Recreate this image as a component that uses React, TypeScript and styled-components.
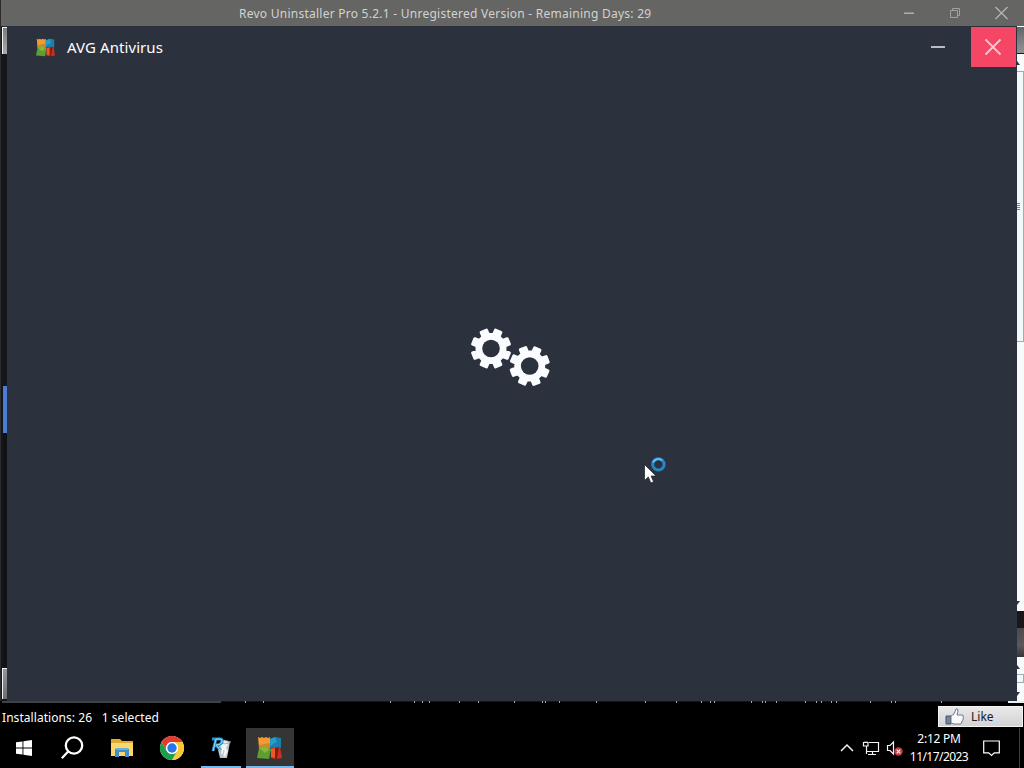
import React from 'react';
import styled, { createGlobalStyle } from 'styled-components';

const GlobalStyle = createGlobalStyle`
  * {
    box-sizing: border-box;
  }

  body {
    margin: 0;
    overflow: hidden;
    background: #000000;
    font-family: 'Noto Sans', 'Open Sans', sans-serif;
  }

  button {
    font-family: inherit;
  }

  svg {
    display: block;
    flex: none;
  }
`;

const Desktop = styled.div`
  position: relative;
  display: flex;
  flex-direction: column;
  width: 1024px;
  height: 768px;
  overflow: hidden;
  background: #000000;
`;

const RevoTitleBar = styled.header`
  display: flex;
  align-items: center;
  height: 26px;
  padding-left: 238px;
  background: #656563;
  border-left: 1px solid #2b2b2b;
`;

const Text = styled.span<{ $size: number; $spacing?: number; $color?: string }>`
  font-size: ${({ $size }) => $size}px;
  line-height: 18px;
  letter-spacing: ${({ $spacing }) => $spacing ?? 0}px;
  color: ${({ $color }) => $color ?? '#ffffff'};
  white-space: pre;
`;

const RevoTitle = styled(Text)`
  padding-top: 2px;
`;

const RevoControls = styled.div`
  display: flex;
  margin-left: auto;
`;

const Middle = styled.div`
  display: flex;
  height: 675px;
`;

/* What can be seen of the Revo window on both sides of the AVG window */
const LeftEdge = styled.div`
  display: flex;
  flex-direction: column;
  width: 7px;
  padding-left: 2px;
  background: #14161a;
  border-left: 1px solid #2a2c2f;
`;

const RightEdge = styled.div`
  display: flex;
  flex-direction: column;
  width: 7px;
  overflow: hidden;
  background: #f8fbfc;
`;

const Strip = styled.div<{ $height: number; $fill: string }>`
  flex: none;
  height: ${({ $height }) => $height}px;
  background: ${({ $fill }) => $fill};
`;

const Corner = styled(Strip)`
  border-top: 1px solid #f4f4f4;
  border-left: 1px solid #f4f4f4;
  margin-left: -1px;
`;

const ScrollThumb = styled.div<{ $height: number }>`
  display: flex;
  align-items: center;
  flex: none;
  width: 7px;
  height: ${({ $height }) => $height}px;
  background: #f0fafb;
  border: 1px solid #a1aaac;
  border-left: none;
`;

const AvgWindow = styled.main`
  display: flex;
  flex-direction: column;
  width: 1010px;
  background: #2b323e;
`;

const AvgTitleBar = styled.div`
  display: flex;
  align-items: center;
  height: 42px;
  padding-left: 29px;
`;

const AvgName = styled(Text)`
  margin-left: 12px;
  padding-bottom: 1px;
`;

const AvgControls = styled.div`
  display: flex;
  align-items: center;
  height: 100%;
  margin-left: auto;
`;

const CloseButton = styled.button`
  display: flex;
  align-items: center;
  justify-content: center;
  width: 45px;
  height: 40px;
  margin: 0 1px 0 25px;
  padding: 0 2px 0 0;
  border: none;
  background: #f54765;
`;

const Loader = styled.div`
  display: flex;
  justify-content: center;
  padding: 258px 2px 0 0;
`;

const StatusBar = styled.div`
  display: flex;
  align-items: center;
  height: 25px;
  padding-left: 2px;
`;

const StatusText = styled(Text)`
  padding-top: 4px;
`;

const LikeButton = styled.button`
  display: flex;
  align-items: center;
  align-self: flex-end;
  width: 85px;
  height: 21px;
  margin: 0 1px 1px auto;
  padding: 1px 0 0 6px;
  border: 1px solid #f3f3f3;
  background: linear-gradient(#e9e9ea, #d2d3d4);
`;

const LikeLabel = styled(Text)`
  margin-left: 6px;
`;

const Taskbar = styled.footer`
  display: flex;
  height: 40px;
  background: #000000;
`;

const TaskButton = styled.div<{ $active?: boolean; $drop?: number }>`
  display: flex;
  flex-direction: column;
  align-items: center;
  justify-content: center;
  width: 48px;
  height: 40px;
  margin-right: 1.2px;
  padding-top: ${({ $drop }) => $drop ?? 1}px;
  background: ${({ $active }) => ($active ? '#353535' : 'transparent')};
`;

const RunningButton = styled(TaskButton)`
  justify-content: space-between;
`;

const IconSlot = styled.div`
  display: flex;
  align-items: center;
  flex: 1;
`;

const RunningLine = styled.div<{ $width: number }>`
  width: ${({ $width }) => $width}px;
  height: 2px;
  background: #76b9ed;
`;

const Tray = styled.div`
  display: flex;
  align-items: center;
  margin-left: auto;
`;

const Clock = styled.div`
  display: flex;
  flex-direction: column;
  align-items: center;
  width: 62px;
  margin: 0 13px 0 4px;
`;

const ShowDesktop = styled.div`
  width: 5px;
  height: 40px;
  margin-left: 19px;
  border-left: 1px solid #3c3c3c;
`;

const Pointer = styled.div`
  position: absolute;
  left: 644px;
  top: 456px;
`;

// Outline of an eight-toothed cog round the point (cx, cy)
const gearPath = (cx: number, cy: number, turn: number): string => {
  const points: string[] = [];
  const corners = [
    [-12, 14.2],
    [-8.8, 18.9],
    [8.8, 18.9],
    [12, 14.2],
  ];
  for (let i = 0; i < 8; i++) {
    corners.forEach(([offset, radius]) => {
      const a = ((i * 45 + turn + offset) * Math.PI) / 180;
      points.push(`${(cx + radius * Math.cos(a)).toFixed(2)} ${(cy + radius * Math.sin(a)).toFixed(2)}`);
    });
  }
  return `M${points.join('L')}Z`;
};

const Gear: React.FC<{ cx: number; cy: number; turn: number }> = ({ cx, cy, turn }) => (
  <g>
    <path d={gearPath(cx, cy, turn)} fill="#fbfcff" stroke="#fbfcff" strokeWidth="3" strokeLinejoin="round" />
    <circle cx={cx} cy={cy} r="8.8" fill="#2b323e" />
  </g>
);

const AvgLogo: React.FC<{ width: number; height: number }> = ({ width, height }) => (
  <svg width={width} height={height} viewBox="0 0 25 24" preserveAspectRatio="none">
    <path d="M1 1l2 1 2-1 2 1 2-1 2 1 2-1v11H2z" fill="#f39a35" />
    <path d="M2 9l11-2v5H2z" fill="#d8832c" />
    <path d="M13 3l5-2 6 1v10H13z" fill="#1a7fab" />
    <path d="M13 3l5-2 2 5-7 4z" fill="#269cc8" />
    <path d="M2 12l6-2 6 3-2 10-12-1z" fill="#5c9e31" />
    <path d="M2 12l6-2 5 3-5 4z" fill="#88b53a" />
    <path d="M14 12l9-1 2 11-6 1-5-1z" fill="#c9331d" />
    <path d="M14 13l5-1-1 10-4-1z" fill="#ea5a22" />
    <path d="M18 12l4-1-2 12h-2z" fill="#8e1717" />
  </svg>
);

const ThumbIcon: React.FC = () => (
  <svg width="20" height="18" viewBox="0 0 20 18">
    <path d="M1 8h5v8H1z" fill="#75839b" stroke="#48556b" />
    <path
      d="M6 8l3-2 2-5q2-1 2 2l-1 4h5q2 0 1 2 1 1 0 2 0 2-1 2 0 3-2 3H9l-3-1z"
      fill="#fafafa"
      stroke="#717b8c"
    />
  </svg>
);

const WindowsIcon: React.FC = () => (
  <svg width="16" height="16" viewBox="0 0 16 16" fill="#ffffff">
    <path d="M0 2.3l6.5-.9v6.1H0zM7.4 1.2L16 0v7.5H7.4zM0 8.4h6.5v6.2L0 13.7zM7.4 8.4H16V16l-8.6-1.2z" />
  </svg>
);

const SearchIcon: React.FC = () => (
  <svg width="24" height="24" viewBox="0 0 24 24" fill="none" stroke="#ffffff" strokeWidth="2.3">
    <circle cx="13" cy="9.5" r="8.2" />
    <path d="M7.4 15.3L.8 22.3" />
  </svg>
);

const FolderIcon: React.FC = () => (
  <svg width="22" height="20" viewBox="0 0 22 20">
    <path d="M0 1h9l2 2h11v15H0z" fill="#e3a82f" />
    <path d="M0 5h22v13H0z" fill="#fbd668" />
    <path d="M4 19v-8l2-1h10l2 1v8h-4v-5H8v5z" fill="#3f8fc9" />
    <path d="M5 10h12v2H5z" fill="#68b0dd" />
  </svg>
);

const ChromeIcon: React.FC = () => (
  <svg width="24" height="24" viewBox="0 0 24 24">
    <circle cx="12" cy="12" r="12" fill="#ffffff" />
    <path d="M1.6 6A12 12 0 0 1 22.4 6H12a6 6 0 0 0-5.2 9z" fill="#e33b2e" />
    <path d="M22.4 6A12 12 0 0 1 12 24l5.2-9A6 6 0 0 0 12 6z" fill="#fcc934" />
    <path d="M12 24A12 12 0 0 1 1.6 6l5.2 9a6 6 0 0 0 10.4 0z" fill="#1e9e4a" />
    <circle cx="12" cy="12" r="6" fill="#ffffff" />
    <circle cx="12" cy="12" r="4.7" fill="#2876e8" />
  </svg>
);

const RevoIcon: React.FC = () => (
  <svg width="20" height="22" viewBox="0 0 20 22">
    <path d="M8 6l11-1-3 16H9L7 13z" fill="#b9c3cc" />
    <path d="M9 7h8l-2 4 2 3-3 6-4-4 1-4z" fill="#f2f5f7" />
    <path d="M9 5l4-2 7 2-6 2z" fill="#e6ebee" stroke="#8c99a3" strokeWidth=".6" />
    <path d="M13 13l-1 5" fill="none" stroke="#a9b3bb" strokeWidth=".8" />
    <path d="M2 14L5 2h4q3 0 2 3t-6 3l4 5M1 2h4" fill="none" stroke="#2b93cd" strokeWidth="2.8" />
    <path d="M2 14L5 2h4q3 0 2 3t-6 3l4 5" fill="none" stroke="#9bdcf8" strokeWidth="1" />
  </svg>
);

const TrayIcons: React.FC = () => (
  <svg width="64" height="20" viewBox="0 0 64 20" fill="none" stroke="#f4f4f4" strokeWidth="1.2">
    <path d="M1 13l6-6 6 6" strokeWidth="1.5" />
    <path d="M29 4.5h9.5v9H27M26.5 8v8M32.5 13.5v3M28 16.5h8" />
    <path d="M23.5 4.5h4.5v3.5h-4.5zM25 4.5v-1M27 4.5v-1" />
    <path d="M47.5 7.5h2.5l3.5-3.5v12l-3.5-3.5h-2.5z" />
    <circle cx="58.5" cy="13.5" r="4.2" fill="#c83b42" stroke="none" />
    <path d="M56.7 11.7l3.6 3.6m0-3.6l-3.6 3.6" />
  </svg>
);

const NoticeIcon: React.FC = () => (
  <svg width="17" height="18" viewBox="0 0 17 18" fill="none" stroke="#ffffff" strokeWidth="1.2">
    <path d="M.7 2h15.6v11.8h-5L8.5 16.5l-2.8-2.7h-5z" />
  </svg>
);

// Tops of the letters that show under the lower edge of the AVG window
const letterTops = [
  245, 263, 390, 414, 422, 429, 459, 478, 514, 542, 545, 559, 596, 645, 676, 701, 710, 714, 751, 762,
  765, 776, 805, 816, 821, 831, 836, 870, 891, 895, 941,
];

const HiddenLine: React.FC = () => (
  <svg width="1024" height="2" viewBox="0 0 1024 2" shapeRendering="crispEdges">
    <path d="M2 0h219v2H2z" fill="#3f4245" />
    <path d="M221 0h787v1H221z" fill="#10171b" />
    <path d="M1008 0h16v2h-16z" fill="#e9eeee" />
    {letterTops.map((x) => (
      <path key={x} d={`M${x} 0h1v2h-1z`} fill="#a3a9a9" />
    ))}
  </svg>
);

const App: React.FC = () => (
  <Desktop>
    <GlobalStyle />
    <RevoTitleBar>
      <RevoTitle $size={12} $spacing={0.25} $color="#d2d2d2">
        Revo Uninstaller Pro 5.2.1 - Unregistered Version - Remaining Days: 29
      </RevoTitle>
      <RevoControls>
        <svg width="121" height="26" viewBox="0 0 121 26" fill="none" stroke="#b5b5b5">
          <path d="M1 13.2h10" strokeWidth="1.4" />
          <path d="M47.5 10.5h7v7h-7zM49.5 10.5v-2h7v7h-2" stroke="#a0a0a0" />
          <path d="M92.5 7l12 12m0-12l-12 12" strokeWidth="1.3" />
        </svg>
      </RevoControls>
    </RevoTitleBar>
    <Middle>
      <LeftEdge>
        <Strip $height={1} $fill="#292b2f" />
        <Corner $height={27} $fill="linear-gradient(#7d7d7d, #a9a9a9)" />
        <Strip $height={332} $fill="#14161a" />
        <Strip $height={47} $fill="#4a7ed2" />
        <Strip $height={235} $fill="#101216" />
        <Corner $height={31} $fill="linear-gradient(#969698, #6c6d70)" />
      </LeftEdge>
      <AvgWindow>
        <AvgTitleBar>
          <AvgLogo width={19} height={19} />
          <AvgName $size={15} $spacing={0.08}>AVG Antivirus</AvgName>
          <AvgControls>
            <svg width="16" height="4" viewBox="0 0 16 4">
              <path d="M1 2h14" stroke="#c9ccd3" strokeWidth="1.8" />
            </svg>
            <CloseButton>
              <svg width="18" height="18" viewBox="0 0 18 18">
                <path d="M1.5 1.5l15 15m0-15l-15 15" stroke="#ffc4d0" strokeWidth="1.8" />
              </svg>
            </CloseButton>
          </AvgControls>
        </AvgTitleBar>
        <Loader>
          <svg width="84" height="64" viewBox="469 326 84 64">
            <Gear cx={491} cy={348.5} turn={22.5} />
            <Gear cx={529.7} cy={366} turn={24} />
          </svg>
        </Loader>
      </AvgWindow>
      <RightEdge>
        <Strip $height={1} $fill="#ffffff" />
        <Strip $height={26} $fill="linear-gradient(#606567, #909496)" />
        <Strip $height={1} $fill="#15171a" />
        <svg width="7" height="17" viewBox="0 0 7 17">
          <path d="M0 7l3 4H0z" fill="#333" />
        </svg>
        <ScrollThumb $height={271}>
          <svg width="3" height="8" viewBox="0 0 3 8" shapeRendering="crispEdges">
            <path d="M0 0h3v1H0zM0 2h3v1H0zM0 4h3v1H0zM0 6h3v1H0z" fill="#778083" />
          </svg>
        </ScrollThumb>
        <Strip $height={258} $fill="#f8fbfc" />
        <svg width="7" height="11" viewBox="0 0 7 11">
          <path d="M0 1h3L0 5z" fill="#333" />
        </svg>
        <Strip $height={17} $fill="#1b161b" />
        <Strip $height={29} $fill="linear-gradient(#4a4a4d, #5b585c 60%, #38353a)" />
        <svg width="7" height="17" viewBox="0 0 7 17">
          <path d="M0 8l3 4H0z" fill="#333" />
        </svg>
        <ScrollThumb $height={9} />
        <svg width="7" height="18" viewBox="0 0 7 18">
          <path d="M0 9h3L0 13z" fill="#333" />
        </svg>
      </RightEdge>
    </Middle>
    <HiddenLine />
    <StatusBar>
      <StatusText $size={12} $spacing={0.06}>Installations: 26   1 selected</StatusText>
      <LikeButton>
        <ThumbIcon />
        <LikeLabel $size={12} $color="#202020">Like</LikeLabel>
      </LikeButton>
    </StatusBar>
    <Taskbar>
      <TaskButton $drop={0}><WindowsIcon /></TaskButton>
      <TaskButton $drop={0}><SearchIcon /></TaskButton>
      <TaskButton $drop={0}><FolderIcon /></TaskButton>
      <TaskButton $drop={0}><ChromeIcon /></TaskButton>
      <RunningButton>
        <IconSlot><RevoIcon /></IconSlot>
        <RunningLine $width={40} />
      </RunningButton>
      <RunningButton $active $drop={2}>
        <IconSlot><AvgLogo width={25} height={24} /></IconSlot>
        <RunningLine $width={48} />
      </RunningButton>
      <Tray>
        <TrayIcons />
        <Clock>
          <Text $size={12} $spacing={-0.25}>2:12 PM</Text>
          <Text $size={12} $spacing={-0.55}>11/17/2023</Text>
        </Clock>
        <NoticeIcon />
        <ShowDesktop />
      </Tray>
    </Taskbar>
    <Pointer>
      <svg width="24" height="28" viewBox="0 0 24 28">
        <circle cx="14.4" cy="8.4" r="5.7" fill="none" stroke="#2685c5" strokeWidth="3" />
        <path d="M9 6.5a5.8 5.8 0 0 1 9-2" fill="none" stroke="#67baf0" strokeWidth="2" />
        <path d="M.5 8.5v16l3.8-3.6 2.5 6 2.8-1.2-2.5-5.7h5z" fill="#ffffff" stroke="#1a1c22" strokeWidth=".7" />
      </svg>
    </Pointer>
  </Desktop>
);

export default App;
